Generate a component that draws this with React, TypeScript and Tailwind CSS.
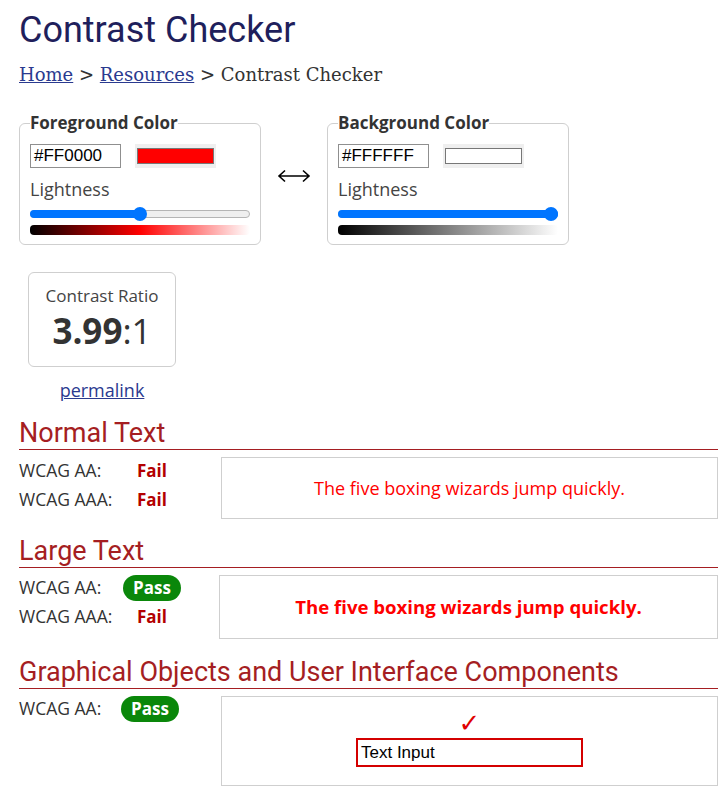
import React from 'react';

const sans = "font-['Open_Sans',sans-serif]";

function Slider({ value }: { value: number }) {
  return (
    <div className="relative h-[14px] w-full">
      <div className="absolute left-0 right-0 top-[3px] h-[8px] rounded-full border border-[#b5b5b5] bg-[#efefef]" />
      <div
        className="absolute left-0 top-[3px] h-[8px] rounded-full bg-[#0075ff]"
        style={{ width: `${value}%` }}
      />
      <div
        className="absolute top-0 h-[14px] w-[14px] -translate-x-1/2 rounded-full bg-[#0075ff]"
        style={{ left: `calc(7px + (100% - 14px) * ${value / 100})` }}
      />
    </div>
  );
}

function ColorBox({
  title,
  hex,
  swatch,
  value,
  gradient,
}: {
  title: string;
  hex: string;
  swatch: string;
  value: number;
  gradient: string;
}) {
  return (
    <fieldset className="w-[242px] rounded-md border border-[#cfcfcf] px-[10px] pb-[9px]">
      <legend className={`${sans} text-[17px] font-bold leading-[24px] text-[#333]`}>{title}</legend>
      <div className="mt-[9px] flex items-center gap-[14px]">
        <div className="flex h-[24px] w-[91px] items-center border border-[#8f8f8f] px-[3px] font-['Liberation_Sans',sans-serif] text-[17px] text-black">
          {hex}
        </div>
        <div className="flex h-[24px] w-[81px] items-center justify-center bg-[#efefef]">
          <div className={`h-[16px] w-[77px] border border-[#777] ${swatch}`} />
        </div>
      </div>
      <div className={`${sans} mt-[8px] text-[18px] leading-[26px] text-[#444]`}>Lightness</div>
      <div className="mt-[5px]">
        <Slider value={value} />
      </div>
      <div className={`mt-[4px] h-[10px] w-full rounded-sm ${gradient}`} />
    </fieldset>
  );
}

function Status({ pass }: { pass: boolean }) {
  if (pass)
    return (
      <span className={`${sans} inline-block rounded-full bg-[#0a870a] px-[10px] text-[17px] font-bold leading-[26px] text-white`}>
        Pass
      </span>
    );
  return <span className={`${sans} pl-[14px] text-[17px] font-bold text-[#b30000]`}>Fail</span>;
}

function Row({ label, pass }: { label: string; pass: boolean }) {
  return (
    <div className="flex h-[29px] items-center">
      <span className={`${sans} w-[104px] text-[17.5px] text-[#333]`}>{label}</span>
      <Status pass={pass} />
    </div>
  );
}

function Section({ title, className, children }: { title: string; className: string; children: React.ReactNode }) {
  return (
    <section className={className}>
      <h2 className="border-b border-[#a51e22] font-['Roboto',sans-serif] text-[27px] leading-[31px] text-[#a51e22]">
        {title}
      </h2>
      <div className="mt-[7px] flex">{children}</div>
    </section>
  );
}

export default function App() {
  return (
    <div className="min-h-[793px] bg-white pl-[19px] pr-[9px] pt-[9px]">
      <h1 className="font-['Roboto',sans-serif] text-[36px] leading-[42px] text-[#1f1f5c]">Contrast Checker</h1>
      <nav className="mt-[12px] font-['DejaVu_Serif',serif] text-[18px] leading-[24px] text-[#333]">
        <a className="text-[#2a3a8f] underline" href="#">Home</a> &gt;{' '}
        <a className="text-[#2a3a8f] underline" href="#">Resources</a> &gt; Contrast Checker
      </nav>

      <div className="mt-[24px] flex items-center gap-[16px]">
        <ColorBox
          title="Foreground Color"
          hex="#FF0000"
          swatch="bg-[#ff0000]"
          value={50}
          gradient="bg-[linear-gradient(to_right,#000,#f00_50%,#fff)]"
        />
        <svg width="34" height="14" viewBox="0 0 34 14" className="mt-[-4px]">
          <path d="M2 7 H32 M8 1.5 L2 7 L8 12.5 M26 1.5 L32 7 L26 12.5" fill="none" stroke="#000" strokeWidth="1.6" />
        </svg>
        <ColorBox
          title="Background Color"
          hex="#FFFFFF"
          swatch="bg-white"
          value={100}
          gradient="bg-[linear-gradient(to_right,#000,#fff)]"
        />
      </div>

      <div className="ml-[9px] mt-[27px] w-[148px]">
        <div className="flex h-[95px] flex-col items-center rounded-md border border-[#cfcfcf] pt-[11px]">
          <div className={`${sans} text-[17px] leading-[24px] text-[#444]`}>Contrast Ratio</div>
          <div className={`${sans} text-[35px] leading-[46px] text-[#333]`}>
            <span className="font-bold">3.99</span>:1
          </div>
        </div>
        <div className="mt-[10px] text-center">
          <a className={`${sans} text-[18px] text-[#2a3a8f] underline`} href="#">permalink</a>
        </div>
      </div>

      <Section title="Normal Text" className="mt-[14px]">
        <div className="-mt-[1px] w-[202px]">
          <Row label="WCAG AA:" pass={false} />
          <Row label="WCAG AAA:" pass={false} />
        </div>
        <div className={`${sans} flex h-[62px] flex-1 items-center justify-center border border-[#cfcfcf] text-[18px] text-[#ff0000]`}>
          The five boxing wizards jump quickly.
        </div>
      </Section>

      <Section title="Large Text" className="mt-[17px]">
        <div className="-mt-[2px] w-[200px]">
          <Row label="WCAG AA:" pass={true} />
          <Row label="WCAG AAA:" pass={false} />
        </div>
        <div className={`${sans} flex h-[64px] flex-1 items-center justify-center border border-[#cfcfcf] text-[18.6px] font-bold text-[#ff0000]`}>
          The five boxing wizards jump quickly.
        </div>
      </Section>

      <Section title="Graphical Objects and User Interface Components" className="mt-[18px]">
        <div className="-mt-[1px] w-[202px]">
          <div className="flex h-[27px] items-center">
            <span className={`${sans} w-[102px] text-[17.5px] text-[#333]`}>WCAG AA:</span>
            <Status pass={true} />
          </div>
        </div>
        <div className="flex h-[90px] flex-1 flex-col items-center border border-[#cfcfcf] pt-[12px]">
          <span className="font-['DejaVu_Sans',sans-serif] text-[26px] leading-[28px] text-[#e00000]">✓</span>
          <div className="mt-[1px] flex h-[29px] w-[227px] items-center border-2 border-[#d40000] px-[3px] font-['Liberation_Sans',sans-serif] text-[17px] text-black">
            Text Input
          </div>
        </div>
      </Section>
    </div>
  );
}
